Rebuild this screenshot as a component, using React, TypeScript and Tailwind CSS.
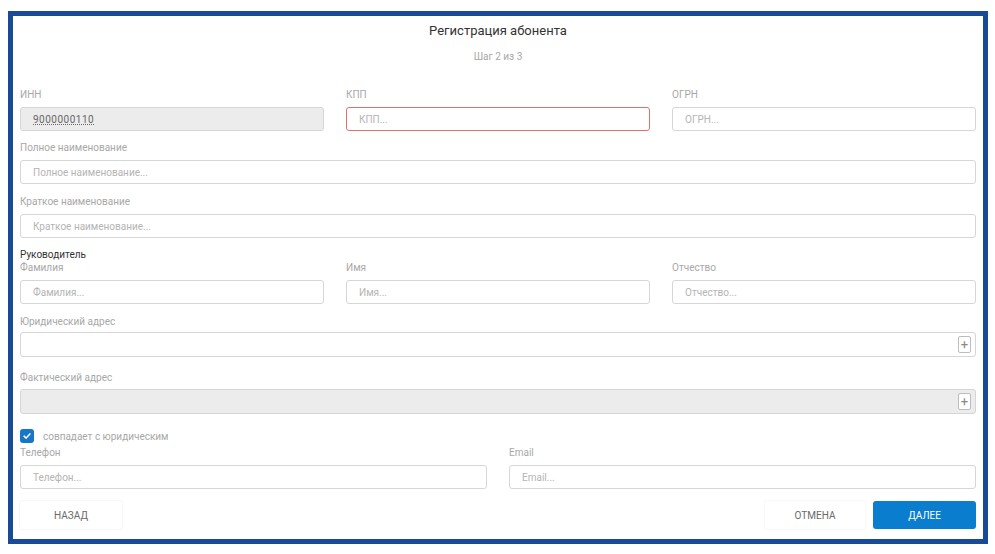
import type { ReactNode } from 'react'

function Label({ children, className = '' }: { children: ReactNode; className?: string }) {
  return <div className={`h-3 text-[10px] leading-3 text-[#a8a8a8] ${className}`}>{children}</div>
}

function Input({
  placeholder,
  value,
  className = '',
  plus = false,
  gray = false,
  error = false,
}: {
  placeholder?: string
  value?: string
  className?: string
  plus?: boolean
  gray?: boolean
  error?: boolean
}) {
  return (
    <div
      className={`flex h-[24px] items-center rounded-[3px] border pl-[12px] pr-[4px] text-[10px] ${
        gray ? 'bg-[#ececec]' : 'bg-white'
      } ${error ? 'border-[#e07070]' : 'border-[#d6d6d6]'} ${className}`}
    >
      {value ? (
        <span className="text-[#666] tracking-[0.5px] [text-decoration:underline_dotted]">{value}</span>
      ) : (
        <span className="text-[#b4b4b4]">{placeholder}</span>
      )}
      {plus && (
        <span className="ml-auto flex h-[17px] w-[13px] items-center justify-center rounded-[2px] border border-[#bdbdbd] bg-white text-[13px] leading-none text-[#888]">
          +
        </span>
      )}
    </div>
  )
}

function Field({
  label,
  placeholder,
  value,
  gray,
  error,
}: {
  label: string
  placeholder?: string
  value?: string
  gray?: boolean
  error?: boolean
}) {
  return (
    <div className="flex flex-col">
      <Label>{label}</Label>
      <Input placeholder={placeholder} value={value} className="mt-[6px]" gray={gray} error={error} />
    </div>
  )
}

export default function App() {
  return (
    <div className="h-[554px] w-[995px] bg-white pl-[8px] pt-[11px]" style={{ fontFamily: 'Roboto, "Noto Sans", sans-serif' }}>
      <div className="flex h-[533px] w-[980px] flex-col border-[5px] border-[#184a97] bg-white px-[7px] pt-[7px]">
        <div className="text-center text-[13px] leading-4 text-[#333]">Регистрация абонента</div>
        <div className="mt-[12px] text-center text-[10px] leading-3 text-[#a8a8a8]">Шаг 2 из 3</div>

        <div className="mt-[26px] grid grid-cols-3 gap-x-[22px]">
          <Field label="ИНН" value="9000000110" gray />
          <Field label="КПП" placeholder="КПП..." error />
          <Field label="ОГРН" placeholder="ОГРН..." />
        </div>

        <div className="mt-[11px]">
          <Field label="Полное наименование" placeholder="Полное наименование..." />
        </div>
        <div className="mt-[12px]">
          <Field label="Краткое наименование" placeholder="Краткое наименование..." />
        </div>

        <div className="mt-[11px] h-3 text-[10px] leading-3 text-[#333]">Руководитель</div>
        <div className="mt-[1px] grid grid-cols-3 gap-x-[22px]">
          <Field label="Фамилия" placeholder="Фамилия..." />
          <Field label="Имя" placeholder="Имя..." />
          <Field label="Отчество" placeholder="Отчество..." />
        </div>

        <div className="mt-[12px] flex flex-col">
          <Label>Юридический адрес</Label>
          <Input className="mt-[4px] h-[25px]" plus />
        </div>
        <div className="mt-[15px] flex flex-col">
          <Label>Фактический адрес</Label>
          <Input className="mt-[5px] h-[25px]" gray plus />
        </div>

        <div className="mt-[15px] flex h-[14px] items-center">
          <span className="flex h-[14px] w-[14px] items-center justify-center rounded-[3px] bg-[#1677c6]">
            <svg viewBox="0 0 12 12" className="h-[10px] w-[10px]" fill="none" stroke="white" strokeWidth="1.8" strokeLinecap="round" strokeLinejoin="round">
              <path d="M2.5 6.2 L5 8.5 L9.5 3.5" />
            </svg>
          </span>
          <span className="ml-[9px] text-[10px] text-[#a8a8a8]">совпадает с юридическим</span>
        </div>

        <div className="mt-[4px] grid grid-cols-2 gap-x-[22px]">
          <Field label="Телефон" placeholder="Телефон..." />
          <Field label="Email" placeholder="Email..." />
        </div>

        <div className="mt-[12px] flex items-center">
          <button className="h-[28px] w-[102px] rounded-[2px] bg-white text-[10px] text-[#6a6a6a] shadow-[0_0_2px_rgba(0,0,0,0.12)]">
            НАЗАД
          </button>
          <button className="ml-auto h-[28px] w-[100px] rounded-[2px] bg-white text-[10px] text-[#6a6a6a] shadow-[0_0_2px_rgba(0,0,0,0.1)]">
            ОТМЕНА
          </button>
          <button className="ml-[8px] h-[28px] w-[103px] rounded-[3px] bg-[#0a7dcf] text-[10px] text-white">
            ДАЛЕЕ
          </button>
        </div>
      </div>
    </div>
  )
}
